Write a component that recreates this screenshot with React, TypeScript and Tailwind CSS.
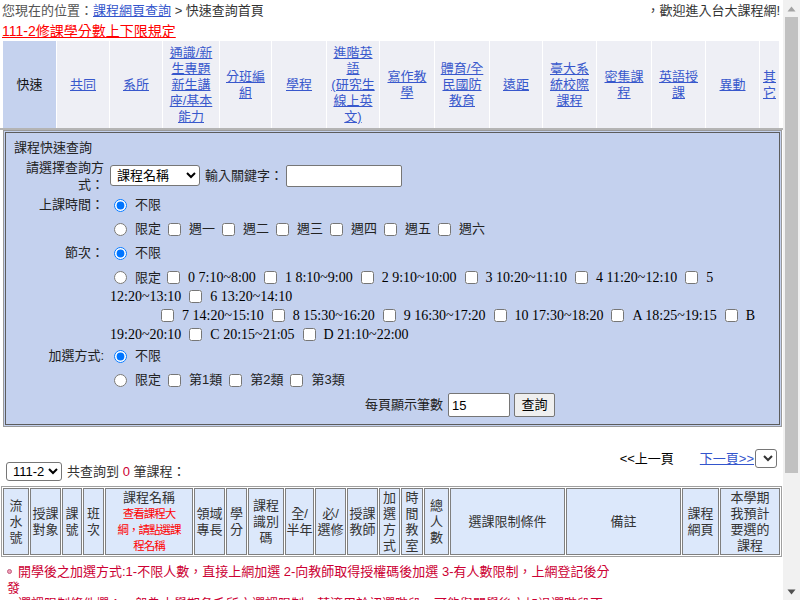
import React from 'react';

const tabs = [
  { w: 'w-[54px]', lines: ['快速'], active: true },
  { w: 'w-[53px]', lines: ['共同'] },
  { w: 'w-[53px]', lines: ['系所'] },
  { w: 'w-[57px]', lines: ['通識/新', '生專題', '新生講', '座/基本', '能力'] },
  { w: 'w-[52px]', lines: ['分班編', '組'] },
  { w: 'w-[55px]', lines: ['學程'] },
  { w: 'w-[53px]', lines: ['進階英', '語', '(研究生', '線上英', '文)'] },
  { w: 'w-[55px]', lines: ['寫作教', '學'] },
  { w: 'w-[55px]', lines: ['體育/全', '民國防', '教育'] },
  { w: 'w-[53px]', lines: ['遠距'] },
  { w: 'w-[54px]', lines: ['臺大系', '統校際', '課程'] },
  { w: 'w-[55px]', lines: ['密集課', '程'] },
  { w: 'w-[54px]', lines: ['英語授', '課'] },
  { w: 'w-[54px]', lines: ['異動'] },
  { w: 'w-[20px]', lines: ['其', '它'] },
];

const headCols = [
  { w: 'w-[26px]', lines: ['流', '水', '號'] },
  { w: 'w-[31px]', lines: ['授課', '對象'] },
  { w: 'w-[20px]', lines: ['課', '號'] },
  { w: 'w-[21px]', lines: ['班', '次'] },
  { w: 'w-[88px]', lines: ['課程名稱'], red: ['查看課程大', '綱，請點選課', '程名稱'] },
  { w: 'w-[31px]', lines: ['領域', '專長'] },
  { w: 'w-[21px]', lines: ['學', '分'] },
  { w: 'w-[36px]', lines: ['課程', '識別', '碼'] },
  { w: 'w-[29px]', lines: ['全/', '半年'] },
  { w: 'w-[31px]', lines: ['必/', '選修'] },
  { w: 'w-[31px]', lines: ['授課', '教師'] },
  { w: 'w-[21px]', lines: ['加', '選', '方', '式'] },
  { w: 'w-[22px]', lines: ['時', '間', '教', '室'] },
  { w: 'w-[25px]', lines: ['總', '人', '數'] },
  { w: 'w-[115px]', lines: ['選課限制條件'] },
  { w: 'w-[115px]', lines: ['備註'] },
  { w: 'w-[37px]', lines: ['課程', '網頁'] },
  { w: 'w-[60px]', lines: ['本學期', '我預計', '要選的', '課程'] },
];

const weekdays = ['週一', '週二', '週三', '週四', '週五', '週六'];
const periodsA = ['0 7:10~8:00', '1 8:10~9:00', '2 9:10~10:00', '3 10:20~11:10', '4 11:20~12:10', '5 12:20~13:10', '6 13:20~14:10'];
const periodsB = ['7 14:20~15:10', '8 15:30~16:20', '9 16:30~17:20', '10 17:30~18:20', 'A 18:25~19:15', 'B 19:20~20:10', 'C 20:15~21:05', 'D 21:10~22:00'];

const notes = [
  ['開學後之加選方式:1-不限人數，直接上網加選 2-向教師取得授權碼後加選 3-有人數限制，上網登記後分', '發'],
  ['選課限制條件欄：一般為本學期各系所之選課限制，若適用於初選階段，可能與開學後之加退選階段不', '同，請務必留意。'],
  ['課程網頁欄：點選「課程網頁」可連結至授課教師所提供之課程網頁。'],
  ['本查詢系統之資料僅供參考，正確資訊以各開課單位公告為準。'],
  ['如有任何問題，請洽教務處課務組。'],
];

function Radio({ name, on }: { name: string; on?: boolean }) {
  return <input type="radio" name={name} defaultChecked={on} className="ml-[4px] mr-[8px] align-[-2px]" />;
}

function Check({ cls = 'ml-[8px] mr-[8px]' }: { cls?: string }) {
  return <input type="checkbox" className={cls + ' align-[-2px]'} />;
}

function Label({ children }: { children: React.ReactNode }) {
  return <div className="w-[98px] shrink-0 text-right">{children}</div>;
}

// fake classic scrollbar drawn at the right edge, like the screenshot
function Scrollbar() {
  return (
    <div className="flex h-full w-[17px] shrink-0 flex-col bg-[#f1f1f1]">
      <div className="flex h-[17px] items-center justify-center">
        <svg width="9" height="6" viewBox="0 0 9 6"><path d="M0.5 5.5 L4.5 0.5 L8.5 5.5 Z" fill="#a3a3a3" /></svg>
      </div>
      <div className="flex-1 px-[2px]">
        <div className="h-[456px] w-full bg-[#c1c1c1]" />
      </div>
      <div className="flex h-[17px] items-center justify-center">
        <svg width="9" height="6" viewBox="0 0 9 6"><path d="M0.5 0.5 L4.5 5.5 L8.5 0.5 Z" fill="#505050" /></svg>
      </div>
    </div>
  );
}

export default function App() {
  return (
    <div className="flex h-[600px] w-[800px] overflow-hidden bg-white text-[13px] text-[#333] font-['Liberation_Sans','Noto_Sans_CJK_TC',sans-serif]">
      <div className="h-full w-[783px] shrink-0 overflow-hidden">
        {/* breadcrumb */}
        <div className="flex h-[21px] items-center justify-between pl-[2px] pr-[3px] leading-[21px]">
          <div>
            <span className="text-[#555]">您現在的位置：</span>
            <a className="text-[#3355cc] underline">課程網頁查詢</a> &gt; 快速查詢首頁
          </div>
          <div>，歡迎進入台大課程網!</div>
        </div>
        <div className="h-[20px] pl-[2px] leading-[20px]">
          <a className="text-[14px] text-[#ff0000] underline">111-2修課學分數上下限規定</a>
        </div>

        {/* tabs */}
        <div className="flex h-[87px] pl-[3px]">
          {tabs.map((t, i) => (
            <div
              key={i}
              className={
                t.w +
                ' flex shrink-0 items-center justify-center overflow-hidden border-r border-white text-center leading-[16px] whitespace-nowrap ' +
                (t.active ? 'bg-[#c5d2ee]' : 'bg-[#eeeff5]')
              }
            >
              {t.active ? (
                <span className="text-[#111]">{t.lines[0]}</span>
              ) : (
                <a className="text-[#3858cc] underline">
                  {t.lines.map((l, j) => (
                    <React.Fragment key={j}>
                      {j > 0 && <br />}
                      {l}
                    </React.Fragment>
                  ))}
                </a>
              )}
            </div>
          ))}
        </div>
        <div className="h-[2px] w-full bg-[#b4b4b4]" />

        {/* quick search form */}
        <div className="ml-[3px] w-[779px] border border-[#9a9a9a] bg-[#c4d1ee] p-px">
          <div className="border border-[#5c5c5c] pb-[6px] text-[#222]">
            <div className="flex h-[25px] items-end pl-[8px] leading-[20px]">課程快速查詢</div>

            <div className="flex h-[35px] items-center">
              <Label>
                <div className="ml-auto w-[84px] leading-[17px]">請選擇查詢方式：</div>
              </Label>
              <select defaultValue="name" className="ml-[6px] h-[21px] w-[90px] rounded-[3px] border border-[#767676] bg-white pl-[2px] text-[13px] text-black">
                <option value="name">課程名稱</option>
              </select>
              <span className="ml-[5px]">輸入關鍵字：</span>
              <input type="text" className="ml-[3px] h-[22px] w-[116px] rounded-[2px] border border-[#767676] bg-white" />
            </div>

            <div className="flex h-[24px] items-center">
              <Label>上課時間：</Label>
              <div className="ml-[6px] flex items-center">
                <Radio name="week" on />
                <span>不限</span>
              </div>
            </div>
            <div className="flex h-[24px] items-center">
              <Label>{''}</Label>
              <div className="ml-[6px] flex items-center">
                <Radio name="week" />
                <span>限定</span>
                {weekdays.map((d) => (
                  <React.Fragment key={d}>
                    <Check cls="ml-[7px] mr-[8px]" />
                    <span>{d}</span>
                  </React.Fragment>
                ))}
              </div>
            </div>

            <div className="flex h-[24px] items-center">
              <Label>節次：</Label>
              <div className="ml-[6px] flex items-center">
                <Radio name="period" on />
                <span>不限</span>
              </div>
            </div>
            <div className="flex h-[79px]">
              <Label>{''}</Label>
              <div className="ml-[6px] w-[662px] pt-[3px] font-['Liberation_Serif','Noto_Sans_CJK_TC',serif] text-[14px] leading-[19px] text-black">
                <Radio name="period" />
                <span className="font-['Liberation_Sans','Noto_Sans_CJK_TC',sans-serif] text-[13px] text-[#222]">限定</span>
                {periodsA.map((p, i) => (
                  <React.Fragment key={p}>
                    <Check cls={(i === 0 ? 'ml-[6px]' : 'ml-[8px]') + ' mr-[8px]'} />
                    {p}
                  </React.Fragment>
                ))}
                <br />
                <span className="inline-block w-[51px]" />
                {periodsB.map((p, i) => (
                  <React.Fragment key={p}>
                    <Check cls={(i === 0 ? 'ml-0' : 'ml-[8px]') + ' mr-[8px]'} />
                    {p}
                  </React.Fragment>
                ))}
              </div>
            </div>

            <div className="flex h-[24px] items-center">
              <Label>加選方式:</Label>
              <div className="ml-[6px] flex items-center">
                <Radio name="add" on />
                <span>不限</span>
              </div>
            </div>
            <div className="flex h-[24px] items-center">
              <Label>{''}</Label>
              <div className="ml-[6px] flex items-center">
                <Radio name="add" />
                <span>限定</span>
                {['第1類', '第2類', '第3類'].map((d) => (
                  <React.Fragment key={d}>
                    <Check cls="ml-[7px] mr-[8px]" />
                    <span>{d}</span>
                  </React.Fragment>
                ))}
              </div>
            </div>

            <div className="flex h-[26px] items-center pl-[359px]">
              <span>每頁顯示筆數</span>
              <input type="text" defaultValue="15" className="ml-[5px] h-[24px] w-[62px] rounded-[2px] border border-[#767676] bg-white pl-[3px] text-black" />
              <button className="ml-[4px] h-[24px] w-[41px] rounded-[2px] border border-[#767676] bg-[#efefef] text-black">查詢</button>
            </div>
          </div>
        </div>

        {/* result bar */}
        <div className="mt-[22px] flex items-start justify-between">
          <div className="mt-[13px] flex h-[19px] items-center pl-[6px]">
            <select defaultValue="1112" className="h-[19px] w-[56px] rounded-[3px] border border-[#767676] bg-white pl-[2px] text-[13px] text-black">
              <option value="1112">111-2</option>
            </select>
            <span className="ml-[5px]">
              共查詢到 <span className="text-[#cc0033]">0</span> 筆課程：
            </span>
          </div>
          <div className="flex h-[19px] items-center pr-[6px]">
            <span className="text-black">&lt;&lt;上一頁</span>
            <a className="ml-[26px] text-[#3355cc] underline">下一頁&gt;&gt;</a>
            <select className="ml-px h-[19px] w-[22px] rounded-[3px] border border-[#767676] bg-white" />
          </div>
        </div>

        {/* result table header */}
        <div className="mt-[5px] ml-px flex w-fit gap-px border border-[#a0a0a0] p-px">
          {headCols.map((c, i) => (
            <div
              key={i}
              className={
                c.w +
                ' flex h-[67px] shrink-0 flex-col items-center justify-center overflow-hidden border border-[#7f7f7f] bg-[#dce8fb] text-center leading-[16px] whitespace-nowrap text-[#333]'
              }
            >
              {c.lines.map((l, j) => (
                <div key={j}>{l}</div>
              ))}
              {c.red && c.red.map((l, j) => (
                <div key={'r' + j} className="text-[11.5px] tracking-[-1px] text-[#ff0000]">{l}</div>
              ))}
            </div>
          ))}
        </div>

        {/* notes */}
        <div className="mt-[7px] pl-[7px] leading-[16px] text-[#cc0033]">
          {notes.map((n, i) => (
            <div key={i}>
              <span className="mr-[6px] inline-block h-[5px] w-[5px] rounded-full border border-[#c06080] bg-[#f0a0b8] align-[2px]" />
              {n.map((l, j) => (
                <React.Fragment key={j}>
                  {j > 0 && <br />}
                  {l}
                </React.Fragment>
              ))}
            </div>
          ))}
        </div>
      </div>
      <Scrollbar />
    </div>
  );
}
